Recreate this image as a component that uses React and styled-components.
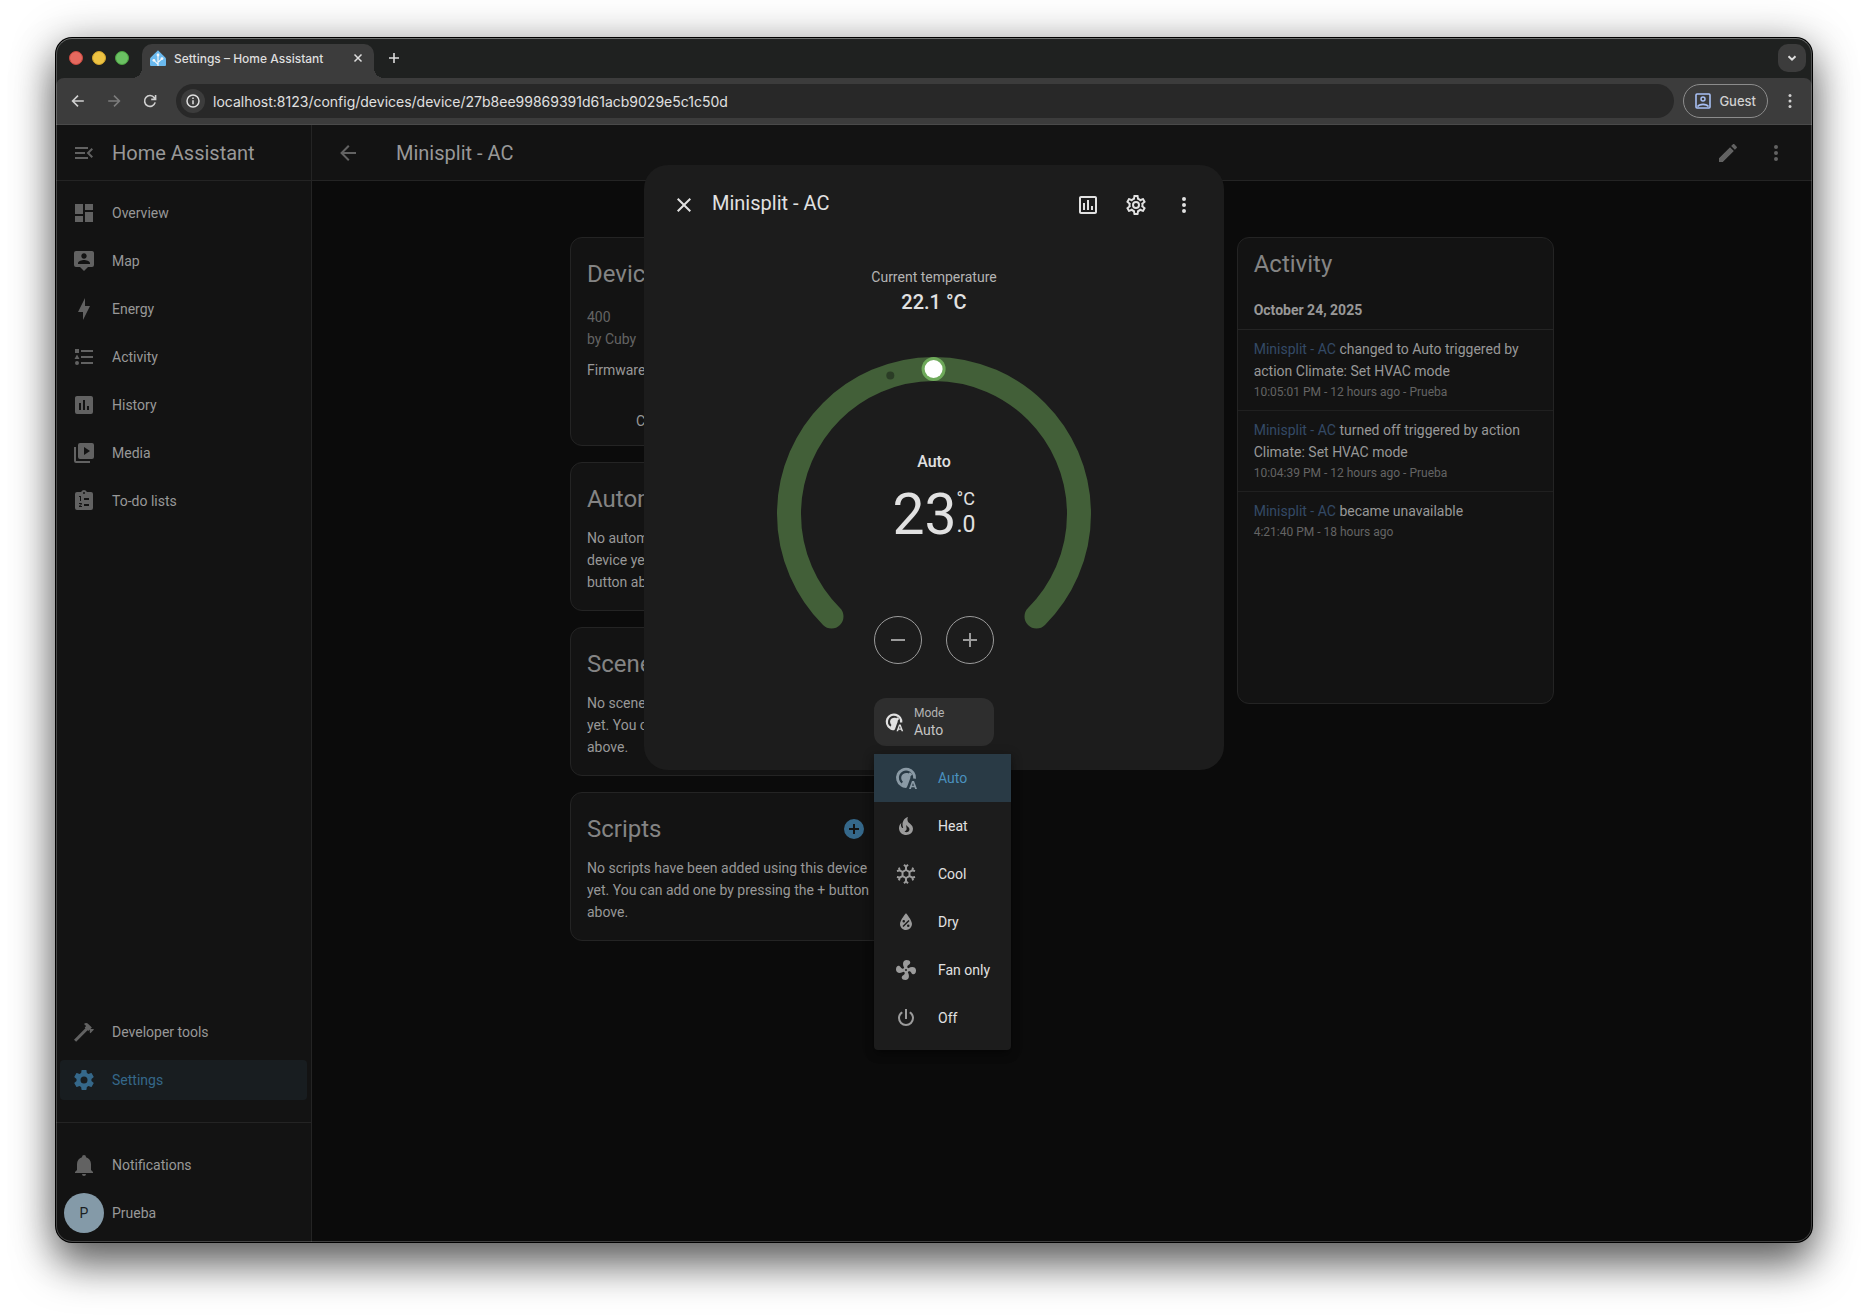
import React from 'react';
import styled, { createGlobalStyle, css } from 'styled-components';

const GlobalStyle = createGlobalStyle`
  *, *::before, *::after { box-sizing: border-box; }
  body {
    margin: 0;
    background: #ffffff;
    font-family: Roboto, 'Noto Sans', sans-serif;
    font-size: 14px;
    -webkit-font-smoothing: antialiased;
  }
  button, input { font: inherit; color: inherit; }
  button { background: none; border: 0; padding: 0; cursor: pointer; }
  a { color: inherit; text-decoration: none; }
  h1, h2, h3, p, ul { margin: 0; padding: 0; font-weight: 400; }
  ul { list-style: none; }
`;

/* ---------- icons ---------- */

const paths = {
  menuOpen: 'M21,15.61L19.59,17L14.58,12L19.59,7L21,8.39L17.44,12L21,15.61M3,6H16V8H3V6M3,13V11H13V13H3M3,18V16H16V18H3Z',
  dashboard: 'M13,3V9H21V3M13,21H21V11H13M3,21H11V15H3M3,13H11V3H3V13Z',
  map: 'M20,2H4A2,2 0 0,0 2,4V16A2,2 0 0,0 4,18H8L12,22L16,18H20A2,2 0 0,0 22,16V4C22,2.89 21.1,2 20,2M12,4.3C13.5,4.3 14.7,5.5 14.7,7C14.7,8.5 13.5,9.7 12,9.7C10.5,9.7 9.3,8.5 9.3,7C9.3,5.5 10.5,4.3 12,4.3M18,15H6V14.1C6,12.1 10,11 12,11C14,11 18,12.1 18,14.1V15Z',
  energy: 'M11 15H6L13 1V9H18L11 23V15Z',
  activity: 'M5,9.5L7.5,14H2.5L5,9.5M3,4H7V8H3V4M5,20A2,2 0 0,0 7,18A2,2 0 0,0 5,16A2,2 0 0,0 3,18A2,2 0 0,0 5,20M9,5V7H21V5H9M9,19H21V17H9V19M9,13H21V11H9V13Z',
  chartBox: 'M17 17H15V13H17M13 17H11V7H13M9 17H7V10H9M19 3H5C3.89 3 3 3.89 3 5V19A2 2 0 0 0 5 21H19A2 2 0 0 0 21 19V5C21 3.89 20.1 3 19 3Z',
  media: 'M4,6H2V20A2,2 0 0,0 4,22H18V20H4V6M20,2A2,2 0 0,1 22,4V16A2,2 0 0,1 20,18H8A2,2 0 0,1 6,16V4A2,2 0 0,1 8,2H20M12,14L18,10L12,6V14Z',
  todo: 'M19,3H14.82C14.4,1.84 13.3,1 12,1C10.7,1 9.6,1.84 9.18,3H5A2,2 0 0,0 3,5V19A2,2 0 0,0 5,21H19A2,2 0 0,0 21,19V5A2,2 0 0,0 19,3M12,3A1,1 0 0,1 13,4A1,1 0 0,1 12,5A1,1 0 0,1 11,4A1,1 0 0,1 12,3M7,7H9V12H8V8H7V7M10,17V18H7V17.08L9,15H7V14H9.25A0.75,0.75 0 0,1 10,14.75C10,14.95 9.92,15.14 9.79,15.27L8.12,17H10M17,17H12V15H17V17M17,11H12V9H17V11Z',
  hammer: 'M2 19.63L13.43 8.2L12.72 7.5L14.14 6.07L12 3.89C13.2 2.7 15.09 2.7 16.27 3.89L19.87 7.5L18.45 8.91H21.29L22 9.62L18.45 13.21L17.74 12.5V9.62L16.27 11.04L15.56 10.33L4.13 21.76L2 19.63Z',
  cog: 'M12,15.5A3.5,3.5 0 0,1 8.5,12A3.5,3.5 0 0,1 12,8.5A3.5,3.5 0 0,1 15.5,12A3.5,3.5 0 0,1 12,15.5M19.43,12.97C19.47,12.65 19.5,12.33 19.5,12C19.5,11.67 19.47,11.34 19.43,11L21.54,9.37C21.73,9.22 21.78,8.95 21.66,8.73L19.66,5.27C19.54,5.05 19.27,4.96 19.05,5.05L16.56,6.05C16.04,5.66 15.5,5.32 14.87,5.07L14.5,2.42C14.46,2.18 14.25,2 14,2H10C9.75,2 9.54,2.18 9.5,2.42L9.13,5.07C8.5,5.32 7.96,5.66 7.44,6.05L4.95,5.05C4.73,4.96 4.46,5.05 4.34,5.27L2.34,8.73C2.21,8.95 2.27,9.22 2.46,9.37L4.57,11C4.53,11.34 4.5,11.67 4.5,12C4.5,12.33 4.53,12.65 4.57,12.97L2.46,14.63C2.27,14.78 2.21,15.05 2.34,15.27L4.34,18.73C4.46,18.95 4.73,19.03 4.95,18.95L7.44,17.94C7.96,18.34 8.5,18.68 9.13,18.93L9.5,21.58C9.54,21.82 9.75,22 10,22H14C14.25,22 14.46,21.82 14.5,21.58L14.87,18.93C15.5,18.67 16.04,18.34 16.56,17.94L19.05,18.95C19.27,19.03 19.54,18.95 19.66,18.73L21.66,15.27C21.78,15.05 21.73,14.78 21.54,14.63L19.43,12.97Z',
  cogOutline: 'M12,8A4,4 0 0,1 16,12A4,4 0 0,1 12,16A4,4 0 0,1 8,12A4,4 0 0,1 12,8M12,10A2,2 0 0,0 10,12A2,2 0 0,0 12,14A2,2 0 0,0 14,12A2,2 0 0,0 12,10M10,22C9.75,22 9.54,21.82 9.5,21.58L9.13,18.93C8.5,18.68 7.96,18.34 7.44,17.94L4.95,18.95C4.73,19.03 4.46,18.95 4.34,18.73L2.34,15.27C2.21,15.05 2.27,14.78 2.46,14.63L4.57,12.97L4.5,12L4.57,11L2.46,9.37C2.27,9.22 2.21,8.95 2.34,8.73L4.34,5.27C4.46,5.05 4.73,4.96 4.95,5.05L7.44,6.05C7.96,5.66 8.5,5.32 9.13,5.07L9.5,2.42C9.54,2.18 9.75,2 10,2H14C14.25,2 14.46,2.18 14.5,2.42L14.87,5.07C15.5,5.32 16.04,5.66 16.56,6.05L19.05,5.05C19.27,4.96 19.54,5.05 19.66,5.27L21.66,8.73C21.79,8.95 21.73,9.22 21.54,9.37L19.43,11L19.5,12L19.43,13L21.54,14.63C21.73,14.78 21.79,15.05 21.66,15.27L19.66,18.73C19.54,18.95 19.27,19.04 19.05,18.95L16.56,17.95C16.04,18.34 15.5,18.68 14.87,18.93L14.5,21.58C14.46,21.82 14.25,22 14,22H10M11.25,4L10.88,6.61C9.68,6.86 8.62,7.5 7.85,8.39L5.44,7.35L4.69,8.65L6.8,10.2C6.4,11.37 6.4,12.64 6.8,13.8L4.68,15.36L5.43,16.66L7.86,15.62C8.63,16.5 9.68,17.14 10.87,17.38L11.24,20H12.76L13.13,17.39C14.32,17.14 15.37,16.5 16.14,15.62L18.57,16.66L19.32,15.36L17.2,13.81C17.6,12.64 17.6,11.37 17.2,10.2L19.31,8.65L18.56,7.35L16.15,8.39C15.38,7.5 14.32,6.86 13.12,6.62L12.75,4H11.25Z',
  bell: 'M21,19V20H3V19L5,17V11C5,7.9 7.03,5.17 10,4.29C10,4.19 10,4.1 10,4A2,2 0 0,1 12,2A2,2 0 0,1 14,4C14,4.1 14,4.19 14,4.29C16.97,5.17 19,7.9 19,11V17L21,19M14,21A2,2 0 0,1 12,23A2,2 0 0,1 10,21',
  arrowLeft: 'M20,11V13H8L13.5,18.5L12.08,19.92L4.16,12L12.08,4.08L13.5,5.5L8,11H20Z',
  pencil: 'M20.71,7.04C21.1,6.65 21.1,6 20.71,5.63L18.37,3.29C18,2.9 17.35,2.9 16.96,3.29L15.12,5.12L18.87,8.87M3,17.25V21H6.75L17.81,9.93L14.06,6.18L3,17.25Z',
  dots: 'M12,16A2,2 0 0,1 14,18A2,2 0 0,1 12,20A2,2 0 0,1 10,18A2,2 0 0,1 12,16M12,10A2,2 0 0,1 14,12A2,2 0 0,1 12,14A2,2 0 0,1 10,12A2,2 0 0,1 12,10M12,4A2,2 0 0,1 14,6A2,2 0 0,1 12,8A2,2 0 0,1 10,6A2,2 0 0,1 12,4Z',
  close: 'M19,6.41L17.59,5L12,10.59L6.41,5L5,6.41L10.59,12L5,17.59L6.41,19L12,13.41L17.59,19L19,17.59L13.41,12L19,6.41Z',
  chartBoxOutline: 'M9 17H7V10H9V17M13 17H11V7H13V17M17 17H15V13H17V17M19 19H5V5H19V19M19 3H5C3.9 3 3 3.9 3 5V19C3 20.1 3.9 21 5 21H19C20.1 21 21 20.1 21 19V5C21 3.9 20.1 3 19 3Z',
  minus: 'M19,13H5V11H19V13Z',
  plus: 'M19,13H13V19H11V13H5V11H11V5H13V11H19V13Z',
  plusCircle: 'M17,13H13V17H11V13H7V11H11V7H13V11H17M12,2A10,10 0 0,0 2,12A10,10 0 0,0 12,22A10,10 0 0,0 22,12A10,10 0 0,0 12,2Z',
  fire: 'M17.66 11.2C17.43 10.9 17.15 10.64 16.89 10.38C16.22 9.78 15.46 9.35 14.82 8.72C13.33 7.26 13 4.85 13.95 3C13 3.23 12.17 3.75 11.46 4.32C8.87 6.4 7.85 10.07 9.07 13.22C9.11 13.32 9.15 13.42 9.15 13.55C9.15 13.77 9 13.97 8.8 14.05C8.57 14.15 8.33 14.09 8.14 13.93C8.08 13.88 8.04 13.83 8 13.76C6.87 12.33 6.69 10.28 7.45 8.64C5.78 10 4.87 12.3 5 14.47C5.06 14.97 5.12 15.47 5.29 15.97C5.43 16.57 5.7 17.17 6 17.7C7.08 19.43 8.95 20.67 10.96 20.92C13.1 21.19 15.39 20.8 17.03 19.32C18.86 17.66 19.5 15 18.56 12.72L18.43 12.46C18.22 12 17.66 11.2 17.66 11.2M14.5 17.5C14.22 17.74 13.76 18 13.4 18.1C12.28 18.5 11.16 17.94 10.5 17.28C11.69 17 12.4 16.12 12.61 15.23C12.78 14.43 12.46 13.77 12.33 13C12.21 12.26 12.23 11.63 12.5 10.94C12.69 11.32 12.89 11.7 13.13 12C13.9 13 15.11 13.44 15.37 14.8C15.41 14.94 15.43 15.08 15.43 15.23C15.46 16.05 15.1 16.95 14.5 17.5Z',
  snowflake: 'M20.79,13.95L18.46,14.57L16.46,13.44V10.56L18.46,9.43L20.79,10.05L21.31,8.12L19.54,7.65L20,5.88L18.07,5.36L17.45,7.69L15.45,8.82L13,7.38V5.12L14.71,3.41L13.29,2L12,3.29L10.71,2L9.29,3.41L11,5.12V7.38L8.5,8.82L6.5,7.69L5.92,5.36L4,5.88L4.47,7.65L2.7,8.12L3.22,10.05L5.55,9.43L7.55,10.56V13.45L5.55,14.58L3.22,13.96L2.7,15.89L4.47,16.36L4,18.12L5.93,18.64L6.55,16.31L8.55,15.18L11,16.62V18.88L9.29,20.59L10.71,22L12,20.71L13.29,22L14.7,20.59L13,18.88V16.62L15.5,15.17L17.5,16.3L18.12,18.63L20,18.12L19.53,16.35L21.3,15.88L20.79,13.95M9.5,10.56L12,9.11L14.5,10.56V13.44L12,14.89L9.5,13.44V10.56Z',
  waterPercent: 'M12,3.25C12,3.25 6,10 6,14C6,17.32 8.69,20 12,20A6,6 0 0,0 18,14C18,10 12,3.25 12,3.25M14.47,9.97L15.53,11.03L9.53,17.03L8.47,15.97M9.75,10A1.25,1.25 0 0,1 11,11.25A1.25,1.25 0 0,1 9.75,12.5A1.25,1.25 0 0,1 8.5,11.25A1.25,1.25 0 0,1 9.75,10M14.25,14.5A1.25,1.25 0 0,1 15.5,15.75A1.25,1.25 0 0,1 14.25,17A1.25,1.25 0 0,1 13,15.75A1.25,1.25 0 0,1 14.25,14.5Z',
  fan: 'M12,11A1,1 0 0,0 11,12A1,1 0 0,0 12,13A1,1 0 0,0 13,12A1,1 0 0,0 12,11M12.5,2C17,2 17.11,5.57 14.75,6.75C13.76,7.24 13.32,8.29 13.13,9.22C13.61,9.42 14.03,9.73 14.35,10.13C18.05,8.13 22.03,8.92 22.03,12.5C22.03,17 18.46,17.1 17.28,14.73C16.78,13.74 15.72,13.3 14.79,13.11C14.59,13.59 14.28,14 13.88,14.34C15.87,18.03 15.08,22 11.5,22C7,22 6.91,18.42 9.27,17.24C10.25,16.75 10.69,15.71 10.89,14.79C10.4,14.59 9.97,14.27 9.65,13.87C5.96,15.85 2,15.07 2,11.5C2,7 5.56,6.89 6.74,9.26C7.24,10.25 8.29,10.68 9.22,10.87C9.41,10.39 9.73,9.97 10.14,9.65C8.15,5.96 8.94,2 12.5,2Z',
  power: 'M16.56,5.44L15.11,6.89C16.84,7.94 18,9.83 18,12A6,6 0 0,1 12,18A6,6 0 0,1 6,12C6,9.83 7.16,7.94 8.88,6.88L7.44,5.44C5.36,6.88 4,9.28 4,12A8,8 0 0,0 12,20A8,8 0 0,0 20,12C20,9.28 18.64,6.88 16.56,5.44M13,3H11V13H13',
};

const Svg = styled.svg`
  display: block;
  flex: none;
  width: ${(p) => p.$size || 24}px;
  height: ${(p) => p.$size || 24}px;
`;

const Icon = ({ name, size }) => (
  <Svg $size={size} viewBox="0 0 24 24" aria-hidden="true">
    <path d={paths[name]} fill="currentColor" />
  </Svg>
);

const ThermostatAutoIcon = ({ size }) => (
  <Svg $size={size} viewBox="0 0 24 24" aria-hidden="true">
    <path
      d="M7.3 18.9A8.6 8.6 0 1 1 20.6 12.6"
      fill="none"
      stroke="currentColor"
      strokeWidth="2.8"
    />
    <path
      d="M15.9 6.2L18.4 8.2L16.4 10.6C16.6 11.6 16.4 12.8 15.6 13.9L13.6 19.4C13.3 20.6 12.6 21.6 12 22C9.9 22 8 21.2 6.4 20L8.9 15.6C6.6 13.4 6.7 9.6 9.2 7.9C11 6.7 13.2 6.7 14.7 7.4Z"
      fill="currentColor"
    />
    <path
      d="M18 15H20L23 23H21.1L20.5 21.2H17.5L16.9 23H15L18 15M18 19.8H20L19 16.9Z"
      fill="currentColor"
      fillRule="evenodd"
    />
  </Svg>
);

const Stroke = ({ d, size = 16, width = 2 }) => (
  <Svg $size={size} viewBox="0 0 16 16" aria-hidden="true">
    <path d={d} fill="none" stroke="currentColor" strokeWidth={width} />
  </Svg>
);

const HomeAssistantLogo = () => (
  <Svg $size={16} viewBox="0 0 16 16" aria-hidden="true">
    <path d="M8 .3L15.3 7.6Q16 8.3 16 9.4V15Q16 16 15 16H1Q0 16 0 15V9.4Q0 8.3 .7 7.6Z" fill="#6ab9ee" />
    <path d="M8 16V5M8 14.4L3.9 10.4M8 12.4L12 8.7" fill="none" stroke="#f2f6fa" strokeWidth="1.2" />
    <circle cx="8" cy="5" r="1.4" fill="#f2f6fa" />
    <circle cx="3.9" cy="10.3" r="1.4" fill="#f2f6fa" />
    <circle cx="12" cy="8.6" r="1.4" fill="#f2f6fa" />
  </Svg>
);

/* ---------- browser window ---------- */

const BrowserWindow = styled.div`
  position: relative;
  display: flex;
  flex-direction: column;
  min-height: calc(100vh - 112px);
  margin: 38px 56px 74px;
  border-radius: 16px;
  overflow: hidden;
  background: #0b0b0b;
  box-shadow: 0 0 0 1px #000, 0 24px 40px rgba(0, 0, 0, 0.5), 0 4px 44px rgba(0, 0, 0, 0.34);

  &::after {
    content: '';
    position: absolute;
    inset: 0;
    border: 1px solid rgba(255, 255, 255, 0.22);
    border-top-color: rgba(255, 255, 255, 0.36);
    border-radius: 16px;
    pointer-events: none;
    z-index: 10;
  }
`;

const TabStrip = styled.div`
  display: flex;
  align-items: center;
  height: 40px;
  padding: 0 6px 0 13px;
  background: #1f2120;
  color: #dedede;
  font-family: Inter, 'Liberation Sans', sans-serif;
`;

const TrafficLights = styled.div`
  display: flex;
  gap: 9px;
  margin-right: 13px;
`;

const Light = styled.button`
  width: 14px;
  height: 14px;
  border-radius: 50%;
  border: 1px solid ${(p) => p.$edge};
  background: ${(p) => p.$fill};
`;

const Tab = styled.div`
  position: relative;
  display: flex;
  align-items: center;
  align-self: flex-end;
  gap: 8px;
  width: 232px;
  height: 34px;
  padding: 0 8px 6px 8px;
  border-radius: 10px 10px 0 0;
  background: #3c3c3c;
  font-size: 12px;
  font-weight: 500;

  &::before,
  &::after {
    content: '';
    position: absolute;
    bottom: 0;
    width: 10px;
    height: 10px;
  }
  &::before {
    left: -10px;
    background: radial-gradient(circle at 0 0, transparent 10px, #3c3c3c 10px);
  }
  &::after {
    right: -10px;
    background: radial-gradient(circle at 100% 0, transparent 10px, #3c3c3c 10px);
  }
`;

const TabTitle = styled.span`
  flex: 1;
  white-space: nowrap;
`;

const StripButton = styled.button`
  display: grid;
  place-items: center;
  width: ${(p) => p.$size}px;
  height: ${(p) => p.$size}px;
  border-radius: 10px;
  background: ${(p) => (p.$filled ? '#3c3c3c' : 'none')};
`;

const NewTab = styled(StripButton)`
  margin: 0 auto 0 6px;
`;

const Toolbar = styled.div`
  display: flex;
  align-items: center;
  height: 47px;
  padding: 0 8px 0 4px;
  background: #3c3c3c;
  border-bottom: 1px solid #4a4a4a;
  border-radius: 8px 8px 0 0;
  color: #d0d0d0;
  font-family: Inter, 'Liberation Sans', sans-serif;
`;

const Chrome = styled.header`
  background: #1f2120;
`;

const ToolButton = styled.button`
  display: grid;
  place-items: center;
  width: 36px;
  height: 34px;
  color: ${(p) => (p.$muted ? '#7c7c7c' : '#d0d0d0')};
`;

const AddressBar = styled.label`
  display: flex;
  align-items: center;
  flex: 1;
  height: 34px;
  margin: 0 9px 0 8px;
  padding: 0 16px 0 5px;
  gap: 8px;
  border-radius: 17px;
  background: #282828;
`;

const SiteInfo = styled.span`
  display: grid;
  place-items: center;
  width: 24px;
  height: 24px;
  border-radius: 50%;
  background: #3c3c3c;
  color: #e0e0e0;
`;

const AddressInput = styled.input`
  flex: 1;
  min-width: 0;
  padding: 0;
  border: 0;
  outline: 0;
  background: transparent;
  color: #e0e0e0;
  font-size: 14px;
`;

const GuestButton = styled.button`
  display: flex;
  align-items: center;
  gap: 8px;
  height: 34px;
  padding: 0 11px;
  border: 1px solid #8c8c8c;
  border-radius: 17px;
  font-size: 13px;
  font-weight: 500;
`;

const BrowserMenu = styled(ToolButton)`
  width: 28px;
  margin-left: 8px;
`;

/* ---------- application shell ---------- */

const AppShell = styled.div`
  position: relative;
  display: flex;
  flex: 1;
  color: #989898;
`;

const Sidebar = styled.nav`
  display: flex;
  flex-direction: column;
  flex: none;
  width: 256px;
  background: #131313;
  border-right: 1px solid #242424;
  font-weight: 500;
`;

const SidebarHeader = styled.div`
  display: flex;
  align-items: center;
  gap: 16px;
  height: 56px;
  padding: 0 16px;
  border-bottom: 1px solid #242424;
  font-size: 20px;
  font-weight: 400;
`;

const MutedButton = styled.button`
  color: #626262;
`;

const NavList = styled.ul`
  display: flex;
  flex-direction: column;
  gap: 8px;
  padding: ${(p) => p.$pad || '12px 4px'};
  margin-top: ${(p) => (p.$bottom ? 'auto' : '0')};
`;

const NavLink = styled.a`
  display: flex;
  align-items: center;
  gap: ${(p) => (p.$user ? 8 : 16)}px;
  height: 40px;
  padding: 0 ${(p) => (p.$user ? 4 : 12)}px;
  border-radius: 4px;

  svg {
    color: #626262;
  }

  ${(p) =>
    p.$active &&
    css`
      background: #181d20;
      color: #35688a;

      svg {
        color: #35688a;
      }
    `}
`;

const Avatar = styled.span`
  display: grid;
  place-items: center;
  width: 40px;
  height: 40px;
  border-radius: 50%;
  background: #849aa8;
  color: #1b1f22;
  font-weight: 400;
`;

const Divider = styled.hr`
  width: 100%;
  height: 1px;
  margin: 0;
  border: 0;
  background: #242424;
`;

const Main = styled.main`
  flex: 1;
  min-width: 0;
`;

const PageHeader = styled.div`
  display: flex;
  align-items: center;
  height: 56px;
  padding: 0 12px;
  background: #131313;
  border-bottom: 1px solid #242424;
`;

const PageTitle = styled.h1`
  flex: 1;
  margin-left: 24px;
  font-size: 20px;
`;

const IconButton = styled.button`
  display: grid;
  place-items: center;
  width: 48px;
  height: 48px;
  color: ${(p) => p.$color || '#626262'};
`;

const Columns = styled.div`
  display: grid;
  grid-template-columns: repeat(3, minmax(0, 1fr));
  align-items: start;
  gap: 16px;
  max-width: 1000px;
  margin: 56px auto 0;
  padding: 0 8px;
`;

const Column = styled.div`
  display: grid;
  gap: 16px;
`;

const Card = styled.section`
  border: 1px solid #242424;
  border-radius: 12px;
  background: #131313;
  line-height: 22px;
`;

const CardHeader = styled.div`
  display: flex;
  align-items: center;
  justify-content: space-between;
  height: 64px;
  padding: 8px 8px 0 16px;
`;

const CardTitle = styled.h2`
  color: #848484;
  font-size: 24px;
  line-height: 32px;
`;

const CardText = styled.p`
  padding: 0 16px 17px;
`;

const DeviceDetails = styled.div`
  padding: 4px 16px 0;
`;

const Secondary = styled.p`
  color: #646464;
`;

const DeviceLine = styled.p`
  margin-top: 9px;
`;

const CardActions = styled.div`
  display: flex;
  padding: 22px 16px 6px 53px;
`;

const TextButton = styled.button`
  height: 36px;
  padding: 0 12px;
`;

const ActivityCard = styled(Card)`
  min-height: 467px;
`;

const ActivityTitle = styled(CardTitle)`
  padding: 10px 16px 11px;
`;

const DateHeading = styled.h3`
  padding: 8px 16px;
  border-bottom: 1px solid #242424;
  font-size: 14px;
  font-weight: 700;
`;

const LogEntry = styled.li`
  padding: 8px 16px;

  & + & {
    border-top: 1px solid #202020;
  }
`;

const EntityLink = styled.a`
  color: #344a66;
`;

const LogTime = styled.p`
  color: #646464;
  font-size: 12px;
  line-height: 20px;
`;

/* ---------- climate dialog ---------- */

const Overlay = styled.div`
  position: absolute;
  inset: 0;
  display: flex;
  justify-content: center;
  align-items: flex-start;
  padding-top: 40px;
`;

const Dialog = styled.div`
  width: 580px;
  padding: 16px 16px 24px;
  border-radius: 24px;
  background: #1c1c1c;
  color: #e1e1e1;
`;

const DialogHeader = styled.div`
  display: flex;
  align-items: center;
`;

const DialogTitle = styled.h2`
  flex: 1;
  margin-left: 4px;
  padding-bottom: 4px;
  font-size: 20px;
`;

const Body = styled.div`
  display: flex;
  flex-direction: column;
  align-items: center;
  padding-top: 36px;
`;

const CurrentLabel = styled.p`
  color: #b4b4b4;
  line-height: 24px;
`;

const CurrentValue = styled.p`
  margin-bottom: 39px;
  font-size: 20px;
  font-weight: 500;
  line-height: 26px;
`;

const Gauge = styled.div`
  display: grid;
  justify-items: center;
  width: 320px;
  height: 320px;
  margin-bottom: 24px;

  & > * {
    grid-area: 1 / 1;
  }
`;

const GaugeInfo = styled.div`
  display: flex;
  flex-direction: column;
  align-items: center;
  gap: 13px;
  padding-top: 96px;
`;

const ActionLabel = styled.p`
  font-size: 16px;
  font-weight: 500;
  line-height: 24px;
`;

const Target = styled.div`
  display: flex;
  height: 56px;
`;

const TargetNumber = styled.span`
  font-size: 57px;
  line-height: 56px;
`;

const TargetSide = styled.span`
  display: flex;
  flex-direction: column;
  font-size: 23px;
  line-height: 28px;
`;

const Unit = styled.span`
  font-size: 18px;
  line-height: 24px;
`;

const StepButtons = styled.div`
  display: flex;
  align-self: end;
  gap: 24px;
  margin-bottom: 10px;
`;

const StepButton = styled.button`
  display: grid;
  place-items: center;
  width: 48px;
  height: 48px;
  border: 1px solid #9b9b9b;
  border-radius: 50%;
  color: #9b9b9b;
`;

const ModeControl = styled.div`
  position: relative;
`;

const ModeButton = styled.button`
  display: flex;
  align-items: center;
  gap: 10px;
  width: 120px;
  height: 48px;
  padding: 0 10px;
  border-radius: 12px;
  background: #2e2e2e;
  text-align: left;
`;

const ModeText = styled.span`
  display: grid;
  color: #c4c4c4;
  line-height: 18px;
`;

const ModeLabel = styled.span`
  color: #b4b4b4;
  font-size: 12px;
  line-height: 16px;
`;

const ModeMenu = styled.ul`
  position: absolute;
  top: 56px;
  left: 0;
  min-width: 137px;
  padding-bottom: 8px;
  border-radius: 0 0 4px 4px;
  background: #1c1c1c;
  box-shadow: 0 5px 8px rgba(0, 0, 0, 0.3), 0 2px 12px rgba(0, 0, 0, 0.25);
`;

const ModeOption = styled.button`
  display: flex;
  align-items: center;
  gap: 20px;
  width: 100%;
  height: 48px;
  padding: 0 20px;
  background: ${(p) => (p.$selected ? '#293a45' : 'none')};
  color: ${(p) => (p.$selected ? '#4a91bf' : '#e1e1e1')};
  white-space: nowrap;

  svg {
    color: ${(p) => (p.$selected ? '#8a9aa5' : '#9b9b9b')};
  }
`;

/* ---------- data ---------- */

const mainLinks = [
  ['dashboard', 'Overview'],
  ['map', 'Map'],
  ['energy', 'Energy'],
  ['activity', 'Activity'],
  ['chartBox', 'History'],
  ['media', 'Media'],
  ['todo', 'To-do lists'],
];

const addCards = [
  ['Automations', 'No automations have been added using this device yet. You can add one by pressing the + button above.'],
  ['Scenes', 'No scenes have been added using this device yet. You can add one by pressing the + button above.'],
  ['Scripts', 'No scripts have been added using this device yet. You can add one by pressing the + button above.'],
];

const logEntries = [
  ['changed to Auto triggered by action Climate: Set HVAC mode', '10:05:01 PM - 12 hours ago - Prueba'],
  ['turned off triggered by action Climate: Set HVAC mode', '10:04:39 PM - 12 hours ago - Prueba'],
  ['became unavailable', '4:21:40 PM - 18 hours ago'],
];

const modes = [
  ['auto', 'Auto'],
  ['fire', 'Heat'],
  ['snowflake', 'Cool'],
  ['waterPercent', 'Dry'],
  ['fan', 'Fan only'],
  ['power', 'Off'],
];

/* ---------- sections ---------- */

const BrowserChrome = () => (
  <Chrome>
    <TabStrip>
      <TrafficLights>
        <Light aria-label="Close window" $fill="#e5695f" $edge="#c9483f" />
        <Light aria-label="Minimize window" $fill="#edc343" $edge="#d0a32c" />
        <Light aria-label="Zoom window" $fill="#6bc163" $edge="#4a9f3f" />
      </TrafficLights>
      <Tab>
        <HomeAssistantLogo />
        <TabTitle>Settings – Home Assistant</TabTitle>
        <StripButton $size={16} aria-label="Close tab">
          <Stroke d="M4.5 4.5L11.5 11.5M11.5 4.5L4.5 11.5" width={1.5} />
        </StripButton>
      </Tab>
      <NewTab $size={28} aria-label="New tab">
        <Stroke d="M8 3V13M3 8H13" width={1.6} />
      </NewTab>
      <StripButton $size={28} $filled aria-label="Search tabs">
        <Stroke d="M4.5 6.2L8 9.7L11.5 6.2" width={2} />
      </StripButton>
    </TabStrip>
    <Toolbar>
      <ToolButton aria-label="Back">
        <Stroke d="M13.8 8H3M8 2.6L2.6 8L8 13.4" width={1.6} />
      </ToolButton>
      <ToolButton $muted aria-label="Forward">
        <Stroke d="M2.2 8H13M8 2.6L13.4 8L8 13.4" width={1.6} />
      </ToolButton>
      <ToolButton aria-label="Reload">
        <Stroke d="M13.2 9.4A5.4 5.4 0 1 1 12.3 4.7L13.4 6M13.6 2V6.4H9.2" width={1.6} />
      </ToolButton>
      <AddressBar>
        <SiteInfo>
          <Svg $size={16} viewBox="0 0 16 16" aria-hidden="true">
            <circle cx="8" cy="8" r="6" fill="none" stroke="currentColor" strokeWidth="1.5" />
            <path d="M8 7.2V11.2M8 4.6V6.1" stroke="currentColor" strokeWidth="1.5" />
          </Svg>
        </SiteInfo>
        <AddressInput
          aria-label="Address"
          readOnly
          value="localhost:8123/config/devices/device/27b8ee99869391d61acb9029e5c1c50d"
        />
      </AddressBar>
      <GuestButton>
        <Svg $size={16} viewBox="0 0 16 16" aria-hidden="true">
          <rect x="1" y="1" width="14" height="14" rx="1" fill="none" stroke="#a8c0f5" strokeWidth="1.6" />
          <circle cx="8" cy="6" r="2" fill="none" stroke="#a8c0f5" strokeWidth="1.5" />
          <path d="M2.5 13.6C4.5 10.6 11.5 10.6 13.5 13.6" fill="none" stroke="#a8c0f5" strokeWidth="1.6" />
        </Svg>
        Guest
      </GuestButton>
      <BrowserMenu aria-label="Browser menu">
        <Svg $size={16} viewBox="0 0 16 16" aria-hidden="true">
          <g fill="currentColor">
            <circle cx="8" cy="2.6" r="1.5" />
            <circle cx="8" cy="8" r="1.5" />
            <circle cx="8" cy="13.4" r="1.5" />
          </g>
        </Svg>
      </BrowserMenu>
    </Toolbar>
  </Chrome>
);

const SideNav = () => (
  <Sidebar aria-label="Main">
    <SidebarHeader>
      <MutedButton aria-label="Collapse sidebar">
        <Icon name="menuOpen" />
      </MutedButton>
      Home Assistant
    </SidebarHeader>
    <NavList>
      {mainLinks.map(([icon, label]) => (
        <li key={label}>
          <NavLink href="#">
            <Icon name={icon} />
            {label}
          </NavLink>
        </li>
      ))}
    </NavList>
    <NavList $bottom $pad="12px 4px 22px">
      <li>
        <NavLink href="#">
          <Icon name="hammer" />
          Developer tools
        </NavLink>
      </li>
      <li>
        <NavLink href="#" $active aria-current="page">
          <Icon name="cog" />
          Settings
        </NavLink>
      </li>
    </NavList>
    <Divider />
    <NavList $pad="22px 4px 9px">
      <li>
        <NavLink href="#">
          <Icon name="bell" />
          Notifications
        </NavLink>
      </li>
      <li>
        <NavLink href="#" $user>
          <Avatar>P</Avatar>
          Prueba
        </NavLink>
      </li>
    </NavList>
  </Sidebar>
);

const DevicePage = () => (
  <Main>
    <PageHeader>
      <IconButton aria-label="Back">
        <Icon name="arrowLeft" />
      </IconButton>
      <PageTitle>Minisplit - AC</PageTitle>
      <IconButton aria-label="Edit">
        <Icon name="pencil" />
      </IconButton>
      <IconButton aria-label="More">
        <Icon name="dots" />
      </IconButton>
    </PageHeader>
    <Columns>
      <Column>
        <Card>
          <CardHeader>
            <CardTitle>Device info</CardTitle>
          </CardHeader>
          <DeviceDetails>
            <Secondary>400</Secondary>
            <Secondary>by Cuby</Secondary>
            <DeviceLine>Firmware</DeviceLine>
          </DeviceDetails>
          <CardActions>
            <TextButton>Configure</TextButton>
          </CardActions>
        </Card>
        {addCards.map(([title, text]) => (
          <Card key={title}>
            <CardHeader>
              <CardTitle>{title}</CardTitle>
              <IconButton $color="#35688a" aria-label={`Add to ${title}`}>
                <Icon name="plusCircle" />
              </IconButton>
            </CardHeader>
            <CardText>{text}</CardText>
          </Card>
        ))}
      </Column>
      <Column />
      <ActivityCard>
        <ActivityTitle>Activity</ActivityTitle>
        <DateHeading>October 24, 2025</DateHeading>
        <ul>
          {logEntries.map(([text, time]) => (
            <LogEntry key={time}>
              <p>
                <EntityLink href="#">Minisplit - AC</EntityLink> {text}
              </p>
              <LogTime>{time}</LogTime>
            </LogEntry>
          ))}
        </ul>
      </ActivityCard>
    </Columns>
  </Main>
);

const ClimateDialog = () => (
  <Overlay>
    <Dialog role="dialog" aria-label="Minisplit - AC">
      <DialogHeader>
        <IconButton $color="#e1e1e1" aria-label="Close">
          <Icon name="close" />
        </IconButton>
        <DialogTitle>Minisplit - AC</DialogTitle>
        <IconButton $color="#e1e1e1" aria-label="History">
          <Icon name="chartBoxOutline" />
        </IconButton>
        <IconButton $color="#e1e1e1" aria-label="Settings">
          <Icon name="cogOutline" />
        </IconButton>
        <IconButton $color="#e1e1e1" aria-label="More">
          <Icon name="dots" />
        </IconButton>
      </DialogHeader>
      <Body>
        <CurrentLabel>Current temperature</CurrentLabel>
        <CurrentValue>22.1 °C</CurrentValue>
        <Gauge>
          <svg width="320" height="320" viewBox="0 0 320 320" aria-hidden="true">
            <path
              d="M57.5 262.5A145 145 0 1 1 262.5 262.5"
              fill="none"
              stroke="#425f38"
              strokeWidth="24"
              strokeLinecap="round"
            />
            <circle cx="116.3" cy="21.6" r="4" fill="#2b3d26" />
            <circle cx="159.6" cy="15" r="12" fill="#6ea95a" />
            <circle cx="159.6" cy="15" r="9" fill="#ffffff" />
          </svg>
          <GaugeInfo>
            <ActionLabel>Auto</ActionLabel>
            <Target>
              <TargetNumber>23</TargetNumber>
              <TargetSide>
                <Unit>°C</Unit>
                <span>.0</span>
              </TargetSide>
            </Target>
          </GaugeInfo>
          <StepButtons>
            <StepButton aria-label="Decrease temperature">
              <Icon name="minus" />
            </StepButton>
            <StepButton aria-label="Increase temperature">
              <Icon name="plus" />
            </StepButton>
          </StepButtons>
        </Gauge>
        <ModeControl>
          <ModeButton aria-haspopup="menu" aria-expanded="true">
            <ThermostatAutoIcon size={20} />
            <ModeText>
              <ModeLabel>Mode</ModeLabel>
              Auto
            </ModeText>
          </ModeButton>
          <ModeMenu role="menu">
            {modes.map(([icon, label], i) => (
              <li key={label} role="none">
                <ModeOption role="menuitem" $selected={i === 0}>
                  {icon === 'auto' ? <ThermostatAutoIcon /> : <Icon name={icon} />}
                  {label}
                </ModeOption>
              </li>
            ))}
          </ModeMenu>
        </ModeControl>
      </Body>
    </Dialog>
  </Overlay>
);

export default function App() {
  return (
    <>
      <GlobalStyle />
      <BrowserWindow>
        <BrowserChrome />
        <AppShell>
          <SideNav />
          <DevicePage />
          <ClimateDialog />
        </AppShell>
      </BrowserWindow>
    </>
  );
}
